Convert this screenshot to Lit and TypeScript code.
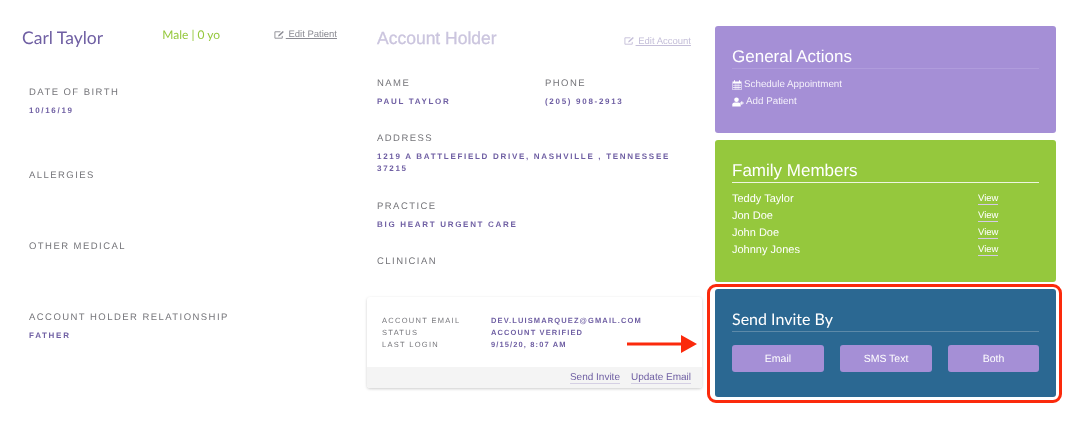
import { LitElement, html, css } from 'lit';
import { customElement } from 'lit/decorators.js';

const editIcon = html`<svg class="edit-icon" viewBox="0 0 12 10" width="11" height="10" fill="none" stroke="currentColor" stroke-width="1">
  <path d="M9 6v2.5H1V1.5h6" />
  <path d="M4.5 6.5l.4-1.6L9.6.6l1.2 1.2L6.1 6.1z" fill="currentColor" stroke="none" />
</svg>`;

const calendarIcon = html`<svg viewBox="0 0 10 10" width="10" height="10" fill="#fff">
  <path d="M.5 1.5h9V10h-9zM1 3.5V9.5h8V3.5z" fill-rule="evenodd" />
  <path d="M2 .3h1v2H2zM7 .3h1v2H7zM1 5.2h8v.6H1zM1 7.3h8v.6H1zM2.8 3.5h.6v6h-.6zM4.7 3.5h.6v6h-.6zM6.6 3.5h.6v6h-.6z" />
</svg>`;

const userPlusIcon = html`<svg viewBox="0 0 12 10" width="12" height="10" fill="#fff">
  <circle cx="4.5" cy="2.8" r="2.3" />
  <path d="M.3 9.5V7.6C.3 6.2 1.5 5.4 2.6 5.4h3.8c1.1 0 2.3.8 2.3 2.2v1.9z" />
  <path d="M9.3 4.2h1v1.3h1.4v1h-1.4v1.3h-1V6.5H8v-1h1.3z" />
</svg>`;

const familyMembers = ['Teddy Taylor', 'Jon Doe', 'John Doe', 'Johnny Jones'];

@customElement('app-root')
export class AppRoot extends LitElement {
  static styles = css`
    :host {
      display: block;
      position: relative;
      width: 1077px;
      height: 423px;
      overflow: hidden;
      background: #fff;
      font-family: 'Liberation Sans', sans-serif;
      text-rendering: geometricPrecision;
    }

    .page {
      display: flex;
      padding-left: 22px;
      will-change: transform;
    }

    .patient {
      width: 315px;
      margin-right: 30px;
    }

    .patient-head {
      display: flex;
      align-items: center;
      height: 22px;
      margin-top: 26px;
    }

    .patient-name {
      width: 141px;
      font: 17.5px 'Lato', sans-serif;
      color: #6f5fa3;
    }

    .patient-meta {
      width: 112px;
      margin-top: -6px;
      font: 12px 'Lato', sans-serif;
      color: #95c83d;
    }

    .edit {
      display: flex;
      align-items: center;
      gap: 1px;
      font-size: 9.5px;
      color: #8b8b93;
      text-decoration: underline;
      white-space: pre;
    }

    .patient-head .edit {
      margin-top: -5px;
    }

    .edit-icon {
      flex: none;
    }

    .patient-fields {
      margin-top: 39px;
      padding-left: 7px;
    }

    .patient-field {
      height: 71px;
    }

    .patient-field.first {
      height: 83px;
    }

    .label {
      font-size: 9.5px;
      line-height: 12px;
      letter-spacing: 1.45px;
      color: #75757a;
    }

    .value {
      margin-top: 6px;
      font-size: 8px;
      font-weight: bold;
      line-height: 12px;
      letter-spacing: 1.7px;
      color: #6f5fa3;
    }

    .account {
      width: 335px;
      margin-right: 13px;
    }

    .account-body {
      padding: 0 11px 0 10px;
    }

    .account-head {
      display: flex;
      align-items: center;
      justify-content: space-between;
      height: 24px;
      margin-top: 26px;
    }

    .account-title {
      font-size: 17.5px;
      color: #cbc5de;
      -webkit-text-stroke: 0.3px #cbc5de;
    }

    .account-head .edit {
      margin-top: 6px;
      color: #c5bfd9;
    }

    .account-grid {
      display: grid;
      grid-template-columns: 168px 1fr;
      margin-top: 28px;
    }

    .block {
      margin-bottom: 25px;
    }

    .block.wide {
      grid-column: 1 / -1;
    }

    .block.address {
      margin-bottom: 26px;
    }

    .block.clinician {
      margin-bottom: 0;
      height: 41px;
    }

    .login-card {
      height: 91px;
      border-radius: 3px;
      box-shadow: 0 1px 3px rgba(0, 0, 0, 0.2);
      display: flex;
      flex-direction: column;
    }

    .login-rows {
      flex: 1;
      display: grid;
      grid-template-columns: 109px 1fr;
      grid-auto-rows: 12px;
      align-content: start;
      padding: 18px 0 0 15px;
      font-size: 7.5px;
      line-height: 12px;
      letter-spacing: 1.3px;
    }

    .login-rows .key {
      color: #77777c;
    }

    .login-rows .val {
      font-weight: bold;
      color: #6f5fa3;
      letter-spacing: 1.12px;
    }

    .login-foot {
      display: flex;
      justify-content: flex-end;
      align-items: center;
      gap: 11px;
      height: 21px;
      padding-right: 11px;
      background: #f4f4f4;
      font-size: 10px;
      color: #6f5fa3;
      border-radius: 0 0 3px 3px;
    }

    .login-foot span {
      border-bottom: 1px solid #d5d0e4;
      line-height: 11px;
    }

    .actions {
      display: flex;
      flex-direction: column;
      width: 341px;
      margin-top: 26px;
    }

    .panel {
      box-sizing: border-box;
      padding: 20px 17px 0;
      border-radius: 3px;
      color: #fff;
    }

    .panel.purple {
      height: 107px;
      background: #a58fd6;
    }

    .panel.green {
      height: 142px;
      margin-top: 7px;
      background: #95c83d;
    }

    .panel.blue {
      height: 108px;
      margin-top: 7px;
      background: #2b6892;
    }

    .panel-title {
      height: 21px;
      padding-bottom: 1px;
      font-size: 17px;
      line-height: 22px;
      border-bottom: 1px solid #b09cdc;
    }

    .green .panel-title {
      border-bottom-color: #eef6df;
    }

    .blue .panel-title {
      font-family: 'Lato', sans-serif;
      font-size: 16px;
      border-bottom-color: #5d8aa9;
    }

    .action-list {
      margin-top: 7px;
      font-size: 9.8px;
      color: #f4f0fb;
    }

    .action {
      display: flex;
      align-items: center;
      gap: 2px;
      height: 17px;
    }

    .members {
      margin-top: 7px;
      font-size: 11px;
    }

    .member {
      display: flex;
      height: 17px;
      align-items: center;
    }

    .member-name {
      width: 246px;
    }

    .member-view {
      margin-top: 2px;
      font-size: 9.5px;
      border-bottom: 1px solid #d5cbe8;
      line-height: 10px;
    }

    .invite-buttons {
      display: grid;
      grid-template-columns: 92px 92px 91px;
      justify-content: space-between;
      margin-top: 13px;
    }

    .invite-button {
      display: flex;
      align-items: center;
      justify-content: center;
      height: 27px;
      border-radius: 3px;
      background: #a58fd6;
      font-size: 10.5px;
      color: #fff;
    }

    .highlight {
      position: absolute;
      left: 707px;
      top: 284px;
      width: 355px;
      height: 119px;
      box-sizing: border-box;
      border: 3px solid #fb2a0c;
      border-radius: 9px;
    }

    .arrow {
      position: absolute;
      left: 627px;
      top: 335px;
    }
  `;

  private renderField(label: string, value: string, first = false) {
    return html`<div class="patient-field ${first ? 'first' : ''}">
      <div class="label">${label}</div>
      ${value ? html`<div class="value">${value}</div>` : ''}
    </div>`;
  }

  render() {
    return html`
      <div class="page">
        <section class="patient">
          <div class="patient-head">
            <div class="patient-name">Carl Taylor</div>
            <div class="patient-meta">Male | 0 yo</div>
            <div class="edit">${editIcon}<span> Edit Patient</span></div>
          </div>
          <div class="patient-fields">
            ${this.renderField('DATE OF BIRTH', '10/16/19', true)}
            ${this.renderField('ALLERGIES', '')}
            ${this.renderField('OTHER MEDICAL', '')}
            ${this.renderField('ACCOUNT HOLDER RELATIONSHIP', 'FATHER')}
          </div>
        </section>

        <section class="account">
          <div class="account-body">
            <div class="account-head">
              <div class="account-title">Account Holder</div>
              <div class="edit">${editIcon}<span> Edit Account</span></div>
            </div>
            <div class="account-grid">
              <div class="block">
                <div class="label">NAME</div>
                <div class="value">PAUL TAYLOR</div>
              </div>
              <div class="block">
                <div class="label">PHONE</div>
                <div class="value">(205) 908-2913</div>
              </div>
              <div class="block wide address">
                <div class="label">ADDRESS</div>
                <div class="value">1219 A BATTLEFIELD DRIVE, NASHVILLE , TENNESSEE 37215</div>
              </div>
              <div class="block wide">
                <div class="label">PRACTICE</div>
                <div class="value">BIG HEART URGENT CARE</div>
              </div>
              <div class="block wide clinician">
                <div class="label">CLINICIAN</div>
              </div>
            </div>
          </div>
          <div class="login-card">
            <div class="login-rows">
              <div class="key">ACCOUNT EMAIL</div>
              <div class="val">DEV.LUISMARQUEZ@GMAIL.COM</div>
              <div class="key">STATUS</div>
              <div class="val">ACCOUNT VERIFIED</div>
              <div class="key">LAST LOGIN</div>
              <div class="val">9/15/20, 8:07 AM</div>
            </div>
            <div class="login-foot">
              <span>Send Invite</span>
              <span>Update Email</span>
            </div>
          </div>
        </section>

        <section class="actions">
          <div class="panel purple">
            <div class="panel-title">General Actions</div>
            <div class="action-list">
              <div class="action">${calendarIcon}<span>Schedule Appointment</span></div>
              <div class="action">${userPlusIcon}<span>Add Patient</span></div>
            </div>
          </div>
          <div class="panel green">
            <div class="panel-title">Family Members</div>
            <div class="members">
              ${familyMembers.map(
                (name) => html`<div class="member">
                  <span class="member-name">${name}</span>
                  <span class="member-view">View</span>
                </div>`
              )}
            </div>
          </div>
          <div class="panel blue">
            <div class="panel-title">Send Invite By</div>
            <div class="invite-buttons">
              <div class="invite-button">Email</div>
              <div class="invite-button">SMS Text</div>
              <div class="invite-button">Both</div>
            </div>
          </div>
        </section>
      </div>

      <div class="highlight"></div>
      <svg class="arrow" width="70" height="18" viewBox="0 0 70 18" fill="#fb2a0c">
        <path d="M0 7.5h54V0l16 9-16 9v-7.5H0z" />
      </svg>
    `;
  }
}

declare global {
  interface HTMLElementTagNameMap {
    'app-root': AppRoot;
  }
}
